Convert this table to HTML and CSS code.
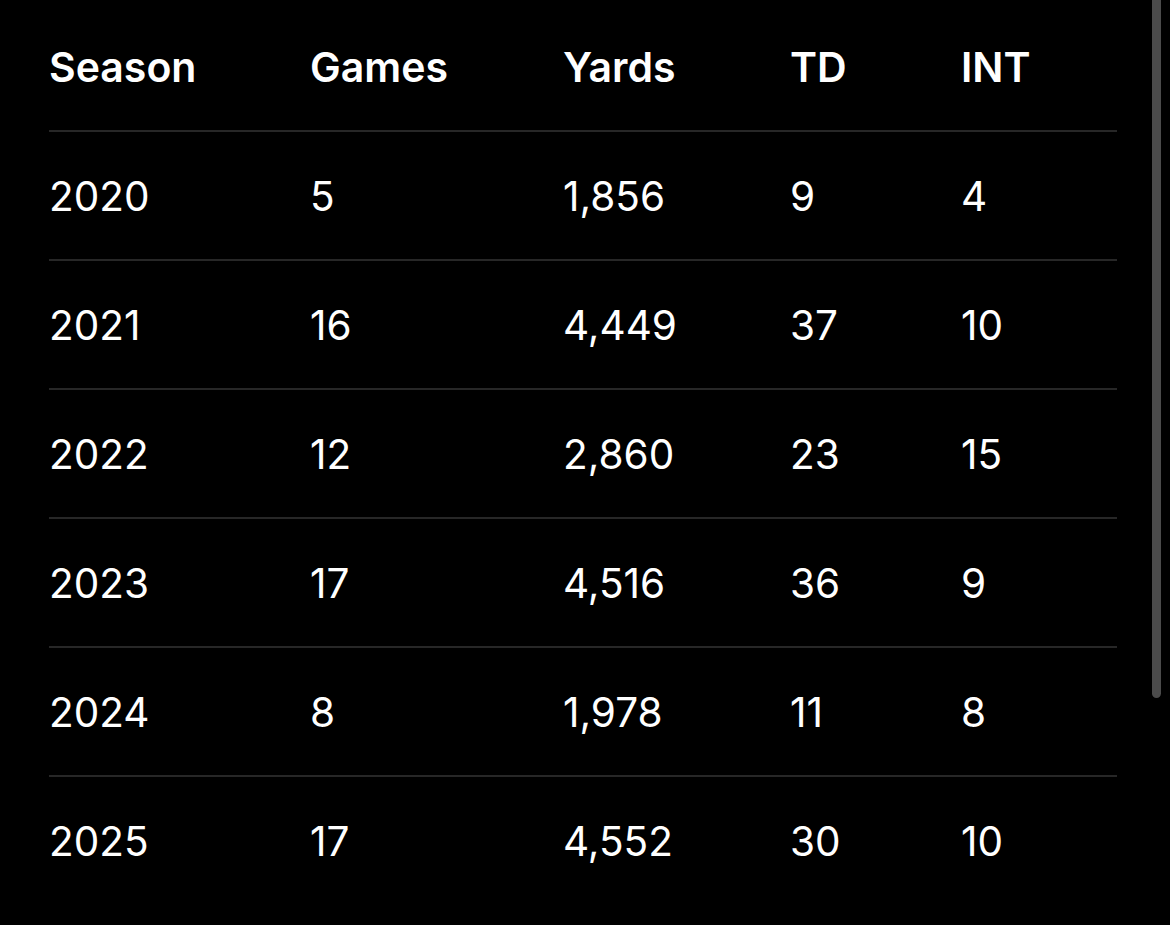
FILE: index.html
```html
<!DOCTYPE html>
<html lang="en">
<head>
<meta charset="utf-8">
<title>Season stats</title>
<link rel="stylesheet" href="styles.css">
</head>
<body>
<div class="page">
  <div class="stats">
    <div class="row head">
      <div class="cell">Season</div>
      <div class="cell">Games</div>
      <div class="cell">Yards</div>
      <div class="cell">TD</div>
      <div class="cell">INT</div>
    </div>
    <div class="row">
      <div class="cell">2020</div>
      <div class="cell">5</div>
      <div class="cell">1,856</div>
      <div class="cell">9</div>
      <div class="cell">4</div>
    </div>
    <div class="row">
      <div class="cell">2021</div>
      <div class="cell">16</div>
      <div class="cell">4,449</div>
      <div class="cell">37</div>
      <div class="cell">10</div>
    </div>
    <div class="row">
      <div class="cell">2022</div>
      <div class="cell">12</div>
      <div class="cell">2,860</div>
      <div class="cell">23</div>
      <div class="cell">15</div>
    </div>
    <div class="row">
      <div class="cell">2023</div>
      <div class="cell">17</div>
      <div class="cell">4,516</div>
      <div class="cell">36</div>
      <div class="cell">9</div>
    </div>
    <div class="row">
      <div class="cell">2024</div>
      <div class="cell">8</div>
      <div class="cell">1,978</div>
      <div class="cell">11</div>
      <div class="cell">8</div>
    </div>
    <div class="row last">
      <div class="cell">2025</div>
      <div class="cell">17</div>
      <div class="cell">4,552</div>
      <div class="cell">30</div>
      <div class="cell">10</div>
    </div>
  </div>
  <div class="scrollbar"></div>
</div>
</body>
</html>
```
FILE: styles.css
```css
html, body {
  margin: 0;
  padding: 0;
  background: #000;
  height: 100%;
  overflow: hidden;
}

body {
  font-family: Inter, "Noto Sans", "Liberation Sans", sans-serif;
  color: #fff;
}

.page {
  position: relative;
  height: 925px;
  padding: 3px 0 0 49px;
  box-sizing: border-box;
}

.stats {
  width: 1068px;
}

.row {
  display: grid;
  grid-template-columns: 261px 253px 227px 171px 1fr;
  align-items: center;
  box-sizing: content-box;
  height: 125px;
  padding-top: 2px;
  border-bottom: 2px solid #272727;
  font-size: 40.5px;
  font-weight: 400;
}

.row.last {
  border-bottom: none;
}

.row.head {
  height: 127px;
  padding-top: 0;
  font-weight: 600;
  font-size: 41px;
}

.cell {
  white-space: nowrap;
}

.scrollbar {
  position: absolute;
  top: -10px;
  left: 1152px;
  width: 9px;
  height: 708px;
  background: #4b4b4b;
  border-radius: 5px;
}
```
